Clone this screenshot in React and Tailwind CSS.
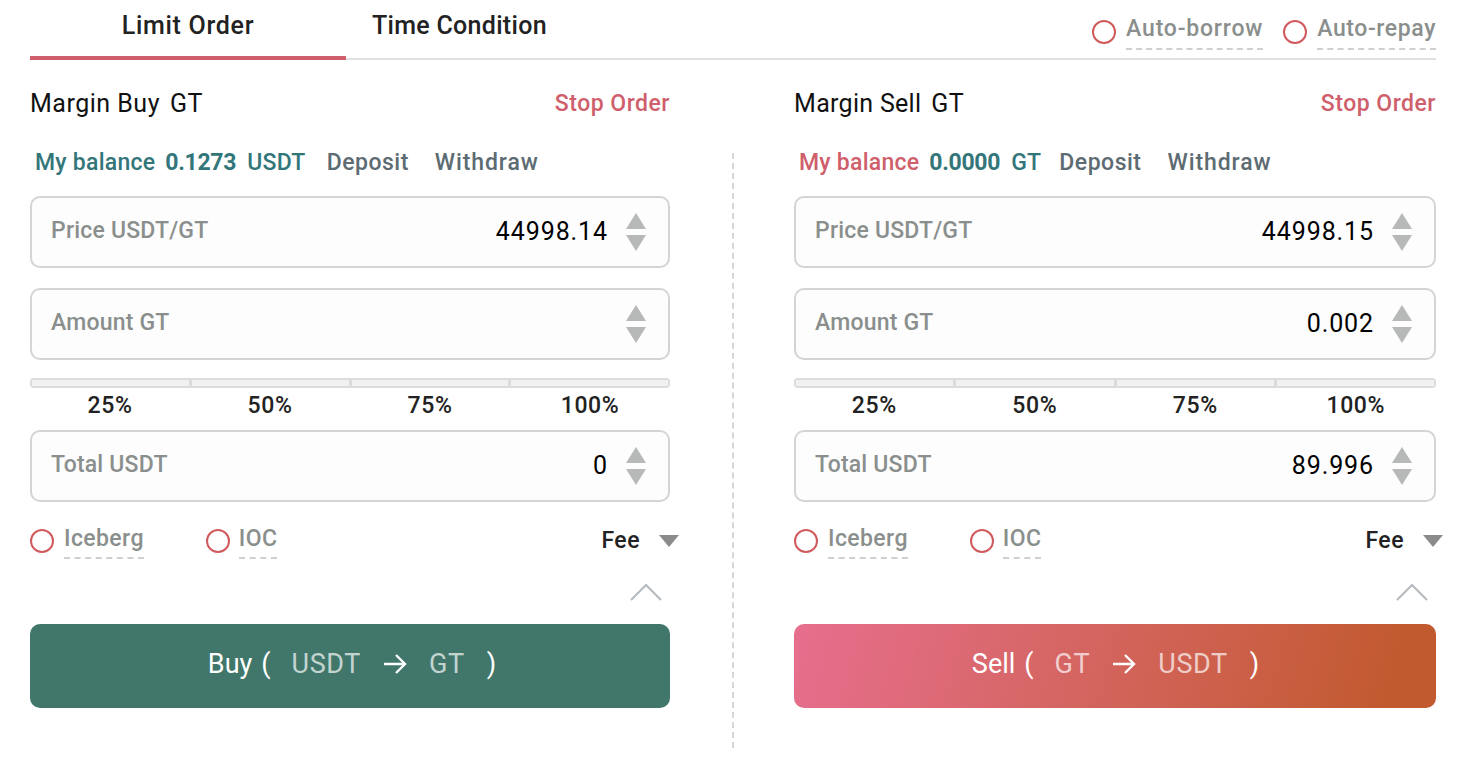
const Font = "font-['Roboto',sans-serif]";

function Updown() {
  return (
    <svg width="20" height="40" viewBox="0 0 20 40" className="block">
      <path d="M10 1 L20 17 L0 17 Z" fill="#b7b8b8" />
      <path d="M0 23 L20 23 L10 39 Z" fill="#b7b8b8" />
    </svg>
  );
}

function Field({ label, value }) {
  return (
    <div className="flex h-[72px] items-center justify-between rounded-[10px] border-2 border-[#d3d4d4] bg-[#fdfdfd] pl-[19px] pr-[22px]">
      <span className="-mt-[2px] text-[23px] font-medium tracking-[0.2px] text-[#8a8f8d]">{label}</span>
      <div className="flex items-center gap-[18px]">
        <span className="text-[25px] tracking-[0.9px] text-black">{value}</span>
        <Updown />
      </div>
    </div>
  );
}

function Radio() {
  return <span className="h-[24px] w-[24px] shrink-0 rounded-full border-2 border-[#d05a5e] bg-white" />;
}

function Slider() {
  const labels = ["25%", "50%", "75%", "100%"];
  return (
    <div className="mt-[18px]">
      <div className="grid h-[10px] grid-cols-4 gap-[3px] overflow-hidden rounded-[4px] bg-[#dcdcdc] p-[2px]">
        {labels.map((l) => (
          <span key={l} className="bg-[#f1f1f1]" />
        ))}
      </div>
      <div className="mt-[1px] grid grid-cols-4 text-center text-[23px] font-medium leading-[34px] tracking-[0.6px] text-[#222]">
        {labels.map((l) => (
          <span key={l}>{l}</span>
        ))}
      </div>
    </div>
  );
}

function Panel({ side, balanceColor, balance, unit, price, amount, total, from, to, btnClass, title, width, titleClass, depositClass, feeClass }) {
  return (
    <div className={width}>
      <div className="mt-[26px] flex h-[36px] items-center justify-between">
        <span className={`flex gap-[10px] text-[25px] text-[#111] ${titleClass}`}>
          <span>{title}</span>
          <span>GT</span>
        </span>
        <span className="text-[23px] font-medium tracking-[0.5px] text-[#cf5f6c]">Stop Order</span>
      </div>
      <div className="mt-[24px] flex h-[34px] items-center pl-[5px] text-[23px] font-medium">
        <span className={`tracking-[0.25px] ${balanceColor}`}>My balance</span>
        <span className="ml-[10px] font-bold tracking-[-0.3px] text-[#33767a]">{balance}</span>
        <span className="ml-[11px] tracking-[0.25px] text-[#33767a]">{unit}</span>
        <span className={`tracking-[0.5px] text-[#5d6b72] ${depositClass}`}>Deposit</span>
        <span className="ml-[26px] tracking-[0.9px] text-[#5d6b72]">Withdraw</span>
      </div>
      <div className="mt-[16px] flex flex-col gap-[20px]">
        <Field label="Price USDT/GT" value={price} />
        <Field label="Amount GT" value={amount} />
      </div>
      <Slider />
      <div className="mt-[7px]">
        <Field label="Total USDT" value={total} />
      </div>
      <div className="mt-[20px] flex h-[38px] items-center">
        <Radio />
        <span className="ml-[10px] border-b-2 border-dashed border-[#cfcfcf] pb-[3px] text-[23px] font-medium leading-[30px] tracking-[0.4px] text-[#8a8f8d]">Iceberg</span>
        <span className="ml-[62px]" />
        <Radio />
        <span className="ml-[9px] border-b-2 border-dashed border-[#cfcfcf] pb-[3px] text-[23px] font-medium leading-[30px] tracking-[0.4px] text-[#8a8f8d]">IOC</span>
        <span className="ml-auto text-[23px] font-medium tracking-[0.5px] text-[#222]">Fee</span>
        <svg width="20" height="12" viewBox="0 0 20 12" className={`ml-[19px] ${feeClass}`}>
          <path d="M0 0 H20 L10 12 Z" fill="#8b8b8b" />
        </svg>
      </div>
      <div className="mt-[22px] flex justify-end pr-[7px]">
        <svg width="34" height="20" viewBox="0 0 34 20" className="block">
          <path d="M2 18 L17 3 L32 18" fill="none" stroke="#b4bac0" strokeWidth="2" />
        </svg>
      </div>
      <button className={`mt-[22px] flex h-[84px] w-full items-center justify-center rounded-[10px] pb-[4px] text-[27px] text-white ${btnClass}`}>
        <span>{side}</span>
        <span className="ml-[9px]">(</span>
        <span className="ml-[21px] tracking-[0.6px] text-white/70">{from}</span>
        <svg width="24" height="22" viewBox="0 0 24 22" className="ml-[22px]" fill="none" stroke="white" strokeWidth="2.4">
          <path d="M1 11 H22 M13 2 L22 11 L13 20" />
        </svg>
        <span className="ml-[22px] tracking-[0.6px] text-white/70">{to}</span>
        <span className="ml-[22px]">)</span>
      </button>
    </div>
  );
}

function TopOption({ label, className, tracking }) {
  return (
    <div className={`flex items-center ${className || ""}`}>
      <Radio />
      <span className={`ml-[10px] -mt-[2px] border-b-2 border-dashed border-[#cfcfcf] pb-[3px] text-[23px] font-medium leading-[32px] text-[#8a8f8d] ${tracking}`}>{label}</span>
    </div>
  );
}

export default function App() {
  return (
    <div className={`h-[762px] w-[1460px] overflow-hidden bg-white pl-[30px] pr-[24px] ${Font}`}>
      <div className="flex h-[60px] items-stretch border-b-2 border-[#dfe0e4]">
        <div className="-mb-[2px] flex w-[316px] items-start justify-center border-b-[4px] border-[#cf5f6c] pt-[8px]">
          <span className="text-[25px] font-medium leading-[36px] tracking-[0.7px] text-[#222]">Limit Order</span>
        </div>
        <div className="ml-[26px] pt-[8px] text-[25px] font-medium leading-[36px] tracking-[0.3px] text-[#222]">Time Condition</div>
        <div className="ml-auto flex items-center pt-[6px]">
          <TopOption label="Auto-borrow" tracking="tracking-[0.8px]" />
          <TopOption label="Auto-repay" className="ml-[20px]" tracking="tracking-[0.6px]" />
        </div>
      </div>
      <div className="flex items-start">
        <Panel
          width="w-[640px]"
          title="Margin Buy"
          titleClass="tracking-[0.5px]"
          depositClass="ml-[21px]"
          feeClass="-mr-[9px]"
          side="Buy"
          balanceColor="text-[#33767a]"
          balance="0.1273"
          unit="USDT"
          price="44998.14"
          amount=""
          total="0"
          from="USDT"
          to="GT"
          btnClass="pl-[4px] bg-[#40776a]"
        />
        <div className="flex w-[124px] justify-center">
          <div className="ml-[2px] mt-[93px] h-[595px] border-l-2 border-dashed border-[#d6d6d6]" />
        </div>
        <Panel
          width="w-[642px]"
          title="Margin Sell"
          titleClass="tracking-[0.3px]"
          depositClass="ml-[18px]"
          feeClass="-mr-[7px]"
          side="Sell"
          balanceColor="text-[#cf5f6c]"
          balance="0.0000"
          unit="GT"
          price="44998.15"
          amount="0.002"
          total="89.996"
          from="GT"
          to="USDT"
          btnClass="pl-[1px] bg-[linear-gradient(105deg,#e66f8e_0%,#c25a30_92%)]"
        />
      </div>
    </div>
  );
}
